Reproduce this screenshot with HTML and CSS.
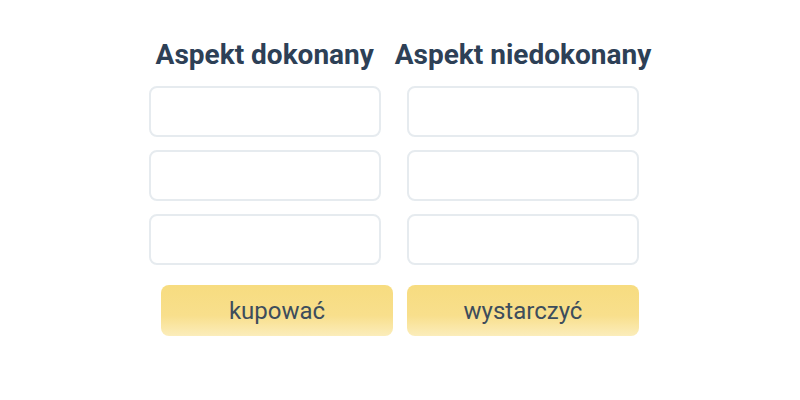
FILE: index.html
```html
<!DOCTYPE html>
<html lang="pl">
<head>
<meta charset="utf-8">
<link rel="stylesheet" href="styles.css">
</head>
<body>
<div class="page">
  <div class="columns">
    <div class="column">
      <h2 class="heading">Aspekt dokonany</h2>
      <input class="field" type="text">
      <input class="field" type="text">
      <input class="field" type="text">
    </div>
    <div class="column">
      <h2 class="heading">Aspekt niedokonany</h2>
      <input class="field" type="text">
      <input class="field" type="text">
      <input class="field" type="text">
    </div>
  </div>
  <div class="buttons">
    <button class="word">kupować</button>
    <button class="word">wystarczyć</button>
  </div>
</div>
</body>
</html>
```
FILE: styles.css
```css
html, body {
  margin: 0;
  padding: 0;
  background: #ffffff;
  font-family: Roboto, "Liberation Sans", sans-serif;
}
.page {
  display: flex;
  flex-direction: column;
  align-items: center;
  padding-top: 39px;
}
.columns {
  display: flex;
  gap: 14px;
}
.column {
  display: flex;
  flex-direction: column;
  align-items: center;
  gap: 13px;
}
.heading {
  margin: 0 0 2px;
  font-size: 28px;
  line-height: 32px;
  font-weight: 700;
  color: #2d4056;
  white-space: nowrap;
}
.field {
  box-sizing: border-box;
  width: 232px;
  height: 51px;
  margin: 0;
  border: 2px solid #e6ebef;
  border-radius: 8px;
  background: #fff;
}
.buttons {
  display: flex;
  gap: 14px;
  margin-top: 20px;
}
.word {
  box-sizing: border-box;
  width: 232px;
  height: 51px;
  border: none;
  border-radius: 8px;
  background: linear-gradient(to bottom, #f7dc80 0%, #f8df8c 60%, #fbedbb 100%);
  font-family: Roboto, "Liberation Sans", sans-serif;
  font-size: 24px;
  color: #3d4d5c;
  padding: 0;
}
```
